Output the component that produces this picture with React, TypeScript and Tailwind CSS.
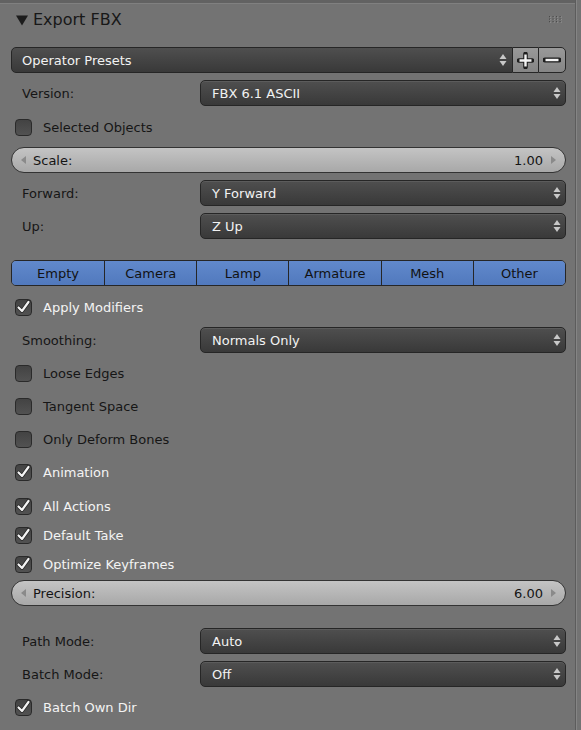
import React from 'react'

const font = { fontFamily: '"DejaVu Sans", "Liberation Sans", sans-serif' }

function UpDown({ className = '' }: { className?: string }) {
  return (
    <svg width="8" height="14" viewBox="0 0 8 14" className={className}>
      <path d="M4 1 L7.5 6 L0.5 6 Z" fill="#c8c8c8" />
      <path d="M0.5 8 L7.5 8 L4 13 Z" fill="#c8c8c8" />
    </svg>
  )
}

function Dropdown({ value, className = '' }: { value: string; className?: string }) {
  return (
    <div
      className={`flex items-center justify-between h-full rounded-[5px] border border-[#262626] bg-gradient-to-b from-[#4f4f4f] to-[#393939] pl-[11px] pr-[4px] text-[13px] text-[#f2f2f2] shadow-[inset_0_1px_0_rgba(255,255,255,0.08)] ${className}`}
    >
      <span className="pt-[1px]">{value}</span>
      <UpDown />
    </div>
  )
}

function LabeledDropdown({ label, value, mt }: { label: string; value: string; mt: string }) {
  return (
    <div className={`flex items-center h-[26px] ${mt}`}>
      <div className="w-[189px] pl-[11px] pt-[1px] text-[13px] text-[#161616]">{label}</div>
      <Dropdown value={value} className="flex-1" />
    </div>
  )
}

function Check({ label, checked, mt }: { label: string; checked?: boolean; mt: string }) {
  return (
    <div className={`flex items-center h-[26px] ${mt}`}>
      <div className="ml-[4px] w-[17px] h-[17px] rounded-[4px] border border-[#2a2a2a] bg-gradient-to-b from-[#434343] to-[#525252] flex items-center justify-center">
        {checked && (
          <svg width="15" height="15" viewBox="0 0 15 15">
            <path d="M2.5 7.5 L6 11 L12.5 2" fill="none" stroke="#222" strokeWidth="3.8" strokeLinecap="round" strokeLinejoin="round" />
            <path d="M2.5 7.5 L6 11 L12.5 2" fill="none" stroke="#f4f4f4" strokeWidth="2.2" strokeLinecap="round" strokeLinejoin="round" />
          </svg>
        )}
      </div>
      <span className={`ml-[11px] pt-[1px] text-[13px] ${checked ? 'text-[#f4f4f4]' : 'text-[#161616]'}`}>{label}</span>
    </div>
  )
}

function Slider({ label, value, mt }: { label: string; value: string; mt: string }) {
  return (
    <div
      className={`flex items-center h-[26px] rounded-full border border-[#333] bg-gradient-to-b from-[#c4c4c4] to-[#a8a8a8] px-[8px] text-[13px] text-[#141414] ${mt}`}
    >
      <svg width="5" height="8" viewBox="0 0 5 8" className="ml-[1px]">
        <path d="M5 0 L0 4 L5 8 Z" fill="#8a8a8a" />
      </svg>
      <span className="ml-[7px] pt-[1px]">{label}</span>
      <span className="ml-auto pt-[1px]">{value}</span>
      <svg width="5" height="8" viewBox="0 0 5 8" className="ml-[8px] mr-[1px]">
        <path d="M0 0 L5 4 L0 8 Z" fill="#8a8a8a" />
      </svg>
    </div>
  )
}

function Grip() {
  return (
    <svg width="14" height="8" viewBox="0 0 14 8">
      {[0, 1, 2, 3].map(c =>
        [0, 1, 2].map(r => (
          <g key={`${c}-${r}`}>
            <rect x={c * 3.5 + 1} y={r * 2.5 + 0.5} width="1.2" height="1.2" fill="#9a9a9a" />
            <rect x={c * 3.5} y={r * 2.5} width="1.2" height="1.2" fill="#4a4a4a" />
          </g>
        ))
      )}
    </svg>
  )
}

const tabs = ['Empty', 'Camera', 'Lamp', 'Armature', 'Mesh', 'Other']

export default function App() {
  return (
    <div className="w-[581px] h-[730px] overflow-hidden bg-[#737373] flex" style={font}>
      <div className="w-[575px] flex flex-col">
        <div className="h-[3px] bg-[#626262]" />
        <div className="border-t border-[#808080]" />
        {/* header */}
        <div className="h-[32px] flex items-center pl-[16px] pr-[12px] text-[16px] text-[#181818]">
          <svg width="12" height="11" viewBox="0 0 12 11">
            <path d="M0 0.5 L12 0.5 L6 10.5 Z" fill="#1c1c1c" />
          </svg>
          <span className="ml-[5px]">Export FBX</span>
          <div className="ml-auto">
            <Grip />
          </div>
        </div>

        <div className="px-[11px] pr-[9px] flex flex-col">
          {/* presets */}
          <div className="flex h-[26px] mt-[11px]">
            <div className="flex-1 flex items-center justify-between rounded-l-[5px] border border-[#262626] bg-gradient-to-b from-[#4f4f4f] to-[#393939] pl-[10px] pr-[5px] text-[13px] text-[#f2f2f2]">
              <span className="pt-[1px]">Operator Presets</span>
              <UpDown />
            </div>
            <div className="w-[25px] flex items-center justify-center border-y border-[#262626] bg-gradient-to-b from-[#999] to-[#858585]">
              <svg width="17" height="17" viewBox="0 0 17 17">
                <path d="M8.5 2 V15 M2 8.5 H15" stroke="#1e1e1e" strokeWidth="4.6" strokeLinecap="round" />
                <path d="M8.5 2.5 V14.5 M2.5 8.5 H14.5" stroke="#f4f4f4" strokeWidth="2.4" />
              </svg>
            </div>
            <div className="w-[28px] flex items-center justify-center rounded-r-[5px] border border-[#262626] bg-gradient-to-b from-[#999] to-[#858585]">
              <svg width="18" height="8" viewBox="0 0 18 8">
                <path d="M2 4 H16" stroke="#1e1e1e" strokeWidth="5" strokeLinecap="round" />
                <path d="M2.5 4 H15.5" stroke="#f4f4f4" strokeWidth="2.4" />
              </svg>
            </div>
          </div>

          <LabeledDropdown label="Version:" value="FBX 6.1 ASCII" mt="mt-[7px]" />
          <Check label="Selected Objects" mt="mt-[8px]" />
          <Slider label="Scale:" value="1.00" mt="mt-[7px]" />
          <LabeledDropdown label="Forward:" value="Y Forward" mt="mt-[7px]" />
          <LabeledDropdown label="Up:" value="Z Up" mt="mt-[7px]" />

          {/* object types */}
          <div className="grid grid-cols-6 h-[26px] mt-[21px] rounded-[5px] border border-[#262626] overflow-hidden">
            {tabs.map((t, i) => (
              <div
                key={t}
                className={`flex items-center justify-center pt-[1px] bg-gradient-to-b from-[#6189cc] to-[#5179bd] text-[13px] text-[#121212] ${
                  i > 0 ? 'border-l border-[#262626]' : ''
                }`}
              >
                {t}
              </div>
            ))}
          </div>

          <Check label="Apply Modifiers" checked mt="mt-[8px]" />
          <LabeledDropdown label="Smoothing:" value="Normals Only" mt="mt-[7px]" />
          <Check label="Loose Edges" mt="mt-[7px]" />
          <Check label="Tangent Space" mt="mt-[7px]" />
          <Check label="Only Deform Bones" mt="mt-[7px]" />
          <Check label="Animation" checked mt="mt-[7px]" />
          <Check label="All Actions" checked mt="mt-[8px]" />
          <Check label="Default Take" checked mt="mt-[3px]" />
          <Check label="Optimize Keyframes" checked mt="mt-[3px]" />
          <Slider label="Precision:" value="6.00" mt="mt-[3px]" />
          <LabeledDropdown label="Path Mode:" value="Auto" mt="mt-[22px]" />
          <LabeledDropdown label="Batch Mode:" value="Off" mt="mt-[7px]" />
          <Check label="Batch Own Dir" checked mt="mt-[7px]" />
        </div>
      </div>
      <div className="w-[1px] bg-[#5c5c5c]" />
      <div className="w-[1px] bg-[#858585]" />
      <div className="flex-1 bg-[#737373]" />
    </div>
  )
}
